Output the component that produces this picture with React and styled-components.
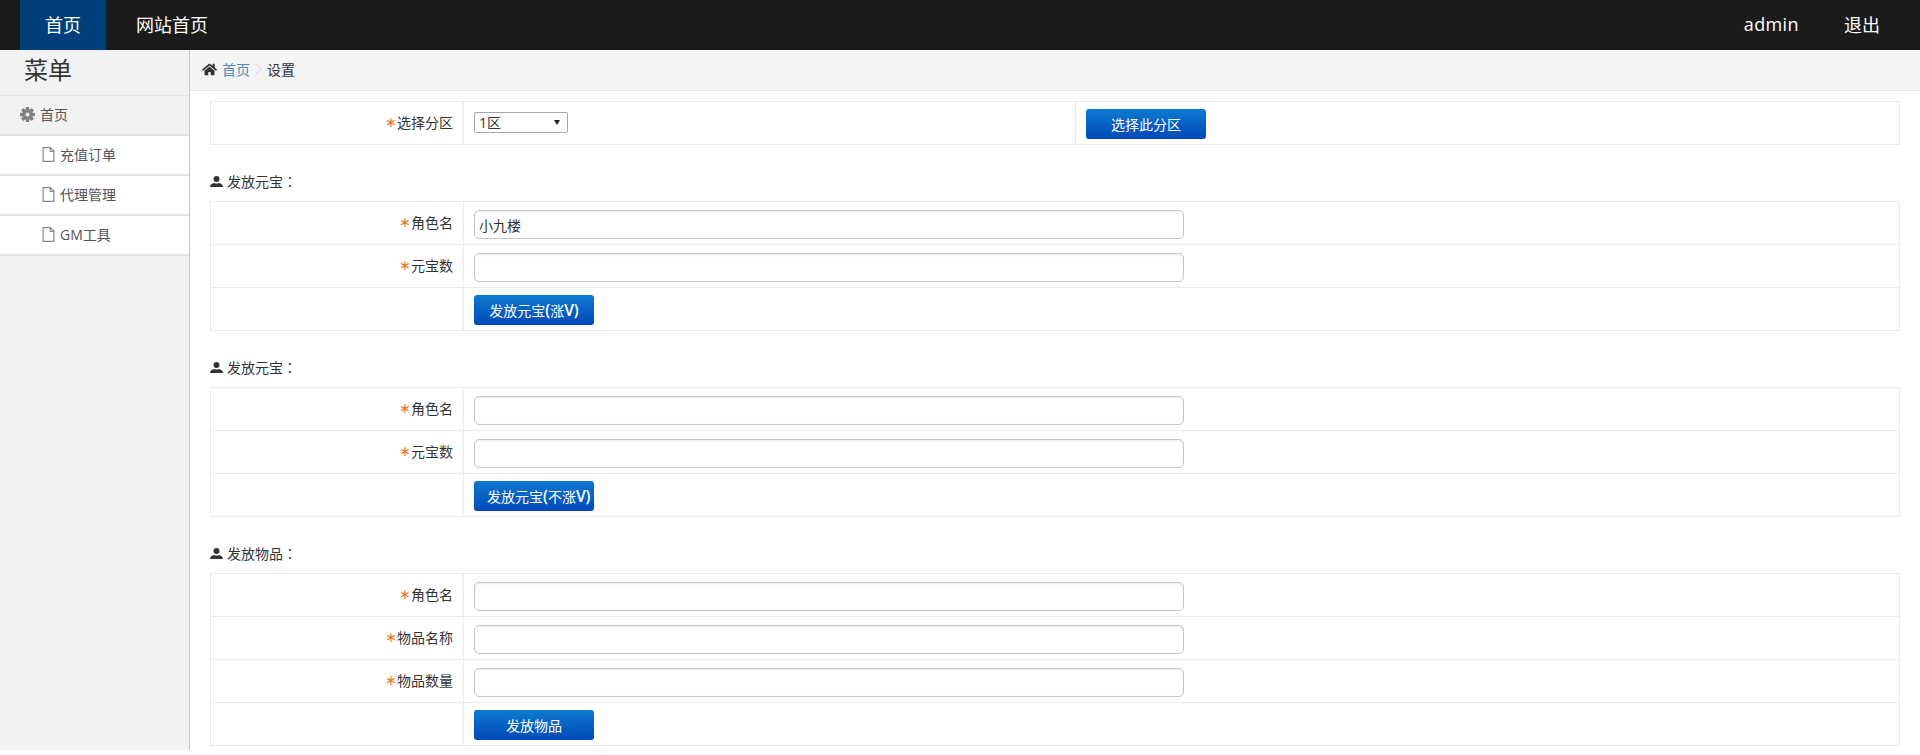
import React from "react";
import styled, { createGlobalStyle } from "styled-components";
import { FaHome } from "react-icons/fa";

const FONT = `"Open Sans", "Noto Sans CJK SC", sans-serif`;

const Global = createGlobalStyle`
  html, body { margin: 0; padding: 0; background: #fff; }
  body { font-family: ${FONT}; font-size: 14px; color: #333; }
  * { box-sizing: border-box; }
`;
const Page = styled.div`height: 755px; overflow: hidden; display: flex; flex-direction: column;`;
const TopBar = styled.header`height: 50px; flex: none; background: #1b1b1b; display: flex; align-items: stretch; padding: 0 15px 0 20px;`;
const TopLink = styled.a`display: flex; align-items: center; padding: 0 25px 2px; margin-right: ${p => p.$gap ?? 0}px; font-size: 18px; letter-spacing: ${p => p.$wide ? ".4px" : "0"}; color: #fff; background: ${p => p.$active ? "#003f7a" : "transparent"};`;
const TopSpacer = styled.div`flex: 1;`;
const Body = styled.div`flex: 1; display: flex; min-height: 0;`;
const Sidebar = styled.aside`width: 190px; height: 700px; flex: none; background: #f2f2f2; border-right: 1px solid #c8c8c8;`;
const MenuTitle = styled.h2`margin: 0; height: 46px; padding: 0 0 0 24px; font-size: 24px; font-weight: 400; line-height: 40px; border-bottom: 1px solid #e3e3e3;`;
const MenuHead = styled.div`height: 40px; display: flex; align-items: center; gap: 5px; padding: 0 0 2px 20px; color: #555; border-bottom: 2px solid #e3e3e3;`;
const GearSvg = styled.svg`width: 15px; height: 15px; flex: none; fill: #808080;`;
const GearHole = styled.circle`fill: #f2f2f2;`;
const MenuItem = styled.div`height: 40px; display: flex; align-items: center; gap: 5px; padding: 0 0 2px 42px; background: #fff; color: #555; border-bottom: 2px solid #e3e3e3;`;
const Main = styled.main`flex: 1; min-width: 0;`;
const Crumbs = styled.nav`height: 41px; display: flex; align-items: center; padding: 0 0 2px 12px; background: #f4f4f4; border-bottom: 1px solid #e5e5e5; > svg:first-child { font-size: 15px; color: #333; margin-right: 5px; }`;
const CrumbLink = styled.a`color: #4b8ac0;`;
const CrumbSep = styled.svg`width: 7px; height: 12px; margin: 0 5px 0 5px; fill: none; stroke: #d8d8d8; stroke-width: 1;`;
const Content = styled.div`padding: 10px 20px 0 20px;`;
const Table = styled.div`border: 1px solid #eaeaea; border-bottom-width: 0;`;
const Row = styled.div`display: grid; grid-template-columns: 253px 1fr; height: 43px; border-bottom: 1px solid #eaeaea;`;
const Label = styled.div`display: flex; align-items: center; justify-content: flex-end; padding: 0 10px 2px 0; border-right: 1px solid #eaeaea;`;
const Star = styled.span`color: #e5792b; font-family: "DejaVu Sans", sans-serif; font-size: 14px;`;
const Value = styled.div`display: flex; align-items: center; padding-left: 10px;`;
const Split = styled.div`display: flex; align-items: stretch; height: 100%; flex: 1; margin-left: -10px;`;
const SplitCell = styled.div`display: flex; align-items: center; padding-left: 10px; width: ${p => p.$w ? p.$w + "px" : "auto"}; flex: ${p => p.$w ? "none" : 1}; border-right: ${p => p.$w ? "1px solid #eaeaea" : "none"};`;
const Input = styled.input`width: 710px; height: 29px; margin-top: 3px; padding: 0 4px; border: 1px solid #c6c6c6; border-radius: 5px; box-shadow: inset 0 1px 2px rgba(0,0,0,.08); font: 14px ${FONT}; color: #333; outline: none; background: #fff;`;
const SelectWrap = styled.div`position: relative; width: 94px; height: 21px; margin-top: -1px;`;
const Select = styled.select`appearance: none; width: 100%; height: 100%; padding: 0 0 0 4px; border: 1px solid #a6a6a6; border-radius: 2px; background: #fff; font: 14px ${FONT}; color: #333;`;
const SelectArrow = styled.span`position: absolute; right: 8px; top: 8px; width: 0; height: 0; border-left: 3px solid transparent; border-right: 3px solid transparent; border-top: 5px solid #222; pointer-events: none;`;
const Button = styled.button`width: 120px; height: 30px; margin-top: 2px; padding: 0 13px 1px; border: none; border-radius: 3px; background: linear-gradient(#0e7ad0, #0049b8); color: #fff; font: 14px ${FONT}; white-space: nowrap; overflow: hidden; display: flex; align-items: center; justify-content: ${p => p.$start ? "flex-start" : "center"};`;
const Latin = styled.span`font-size: 15.5px; font-weight: 600;`;
const SectionTitle = styled.div`height: 56px; padding: 26px 0 10px; line-height: 20px; display: flex; align-items: center; gap: 4px; svg { width: 13px; height: 11px; fill: #333; flex: none; }`;
const Colon = styled.span`font-family: "Noto Sans CJK TC", sans-serif;`;
const FileSvg = styled.svg`width: 13px; height: 15px; flex: none; fill: none; stroke: #8a8a8a; stroke-width: 1.2;`;

const GearIcon = () => (
  <GearSvg viewBox="0 0 15 15">
    <circle cx="7.5" cy="7.5" r="5.4" />
    {[0, 45, 90, 135, 180, 225, 270, 315].map(a => (
      <rect key={a} x="5.8" y="0" width="3.4" height="3.5" rx=".5" transform={`rotate(${a} 7.5 7.5)`} />
    ))}
    <GearHole cx="7.5" cy="7.5" r="2" />
  </GearSvg>
);
const FileIcon = () => (
  <FileSvg viewBox="0 0 13 15"><path d="M1.1 .6h7.3l3.5 3.5v10.3H1.1zM8.2 .8v3.5h3.6" /></FileSvg>
);
const UserIcon = () => (
  <svg viewBox="0 0 13 11"><ellipse cx="6.5" cy="3" rx="3" ry="3" /><path d="M0 11c0-2.6 2-3.6 4.2-4.1 1.4.7 3.2.7 4.6 0C11 7.4 13 8.4 13 11z" /></svg>
);
const Title = ({ children }) => (
  <SectionTitle><UserIcon /><span>{children}<Colon>：</Colon></span></SectionTitle>
);
const Field = ({ label, value }) => (
  <Row>
    <Label><Star>∗</Star>{label}</Label>
    <Value><Input defaultValue={value} /></Value>
  </Row>
);
const Action = ({ children, start }) => (
  <Row>
    <Label />
    <Value><Button $start={start}>{children}</Button></Value>
  </Row>
);

export default function App() {
  return (
    <Page>
      <Global />
      <TopBar>
        <TopLink $active $gap={5}>首页</TopLink>
        <TopLink>网站首页</TopLink>
        <TopSpacer />
        <TopLink $gap={-5} $wide>admin</TopLink>
        <TopLink>退出</TopLink>
      </TopBar>
      <Body>
        <Sidebar>
          <MenuTitle>菜单</MenuTitle>
          <MenuHead><GearIcon />首页</MenuHead>
          <MenuItem><FileIcon />充值订单</MenuItem>
          <MenuItem><FileIcon />代理管理</MenuItem>
          <MenuItem><FileIcon />GM工具</MenuItem>
        </Sidebar>
        <Main>
          <Crumbs>
            <FaHome />
            <CrumbLink>首页</CrumbLink>
            <CrumbSep viewBox="0 0 7 12"><path d="M.5 .5l6 5.5-6 5.5" /></CrumbSep>
            设置
          </Crumbs>
          <Content>
            <Table>
              <Row>
                <Label><Star>∗</Star>选择分区</Label>
                <Value>
                  <Split>
                    <SplitCell $w={612}>
                      <SelectWrap>
                        <Select defaultValue="1"><option value="1">1区</option></Select>
                        <SelectArrow />
                      </SelectWrap>
                    </SplitCell>
                    <SplitCell><Button>选择此分区</Button></SplitCell>
                  </Split>
                </Value>
              </Row>
            </Table>
            <Title>发放元宝</Title>
            <Table>
              <Field label="角色名" value="小九楼" />
              <Field label="元宝数" />
              <Action>发放元宝<Latin>(</Latin>涨<Latin>V)</Latin></Action>
            </Table>
            <Title>发放元宝</Title>
            <Table>
              <Field label="角色名" />
              <Field label="元宝数" />
              <Action start>发放元宝<Latin>(</Latin>不涨<Latin>V)</Latin></Action>
            </Table>
            <Title>发放物品</Title>
            <Table>
              <Field label="角色名" />
              <Field label="物品名称" />
              <Field label="物品数量" />
              <Action>发放物品</Action>
            </Table>
          </Content>
        </Main>
      </Body>
    </Page>
  );
}
